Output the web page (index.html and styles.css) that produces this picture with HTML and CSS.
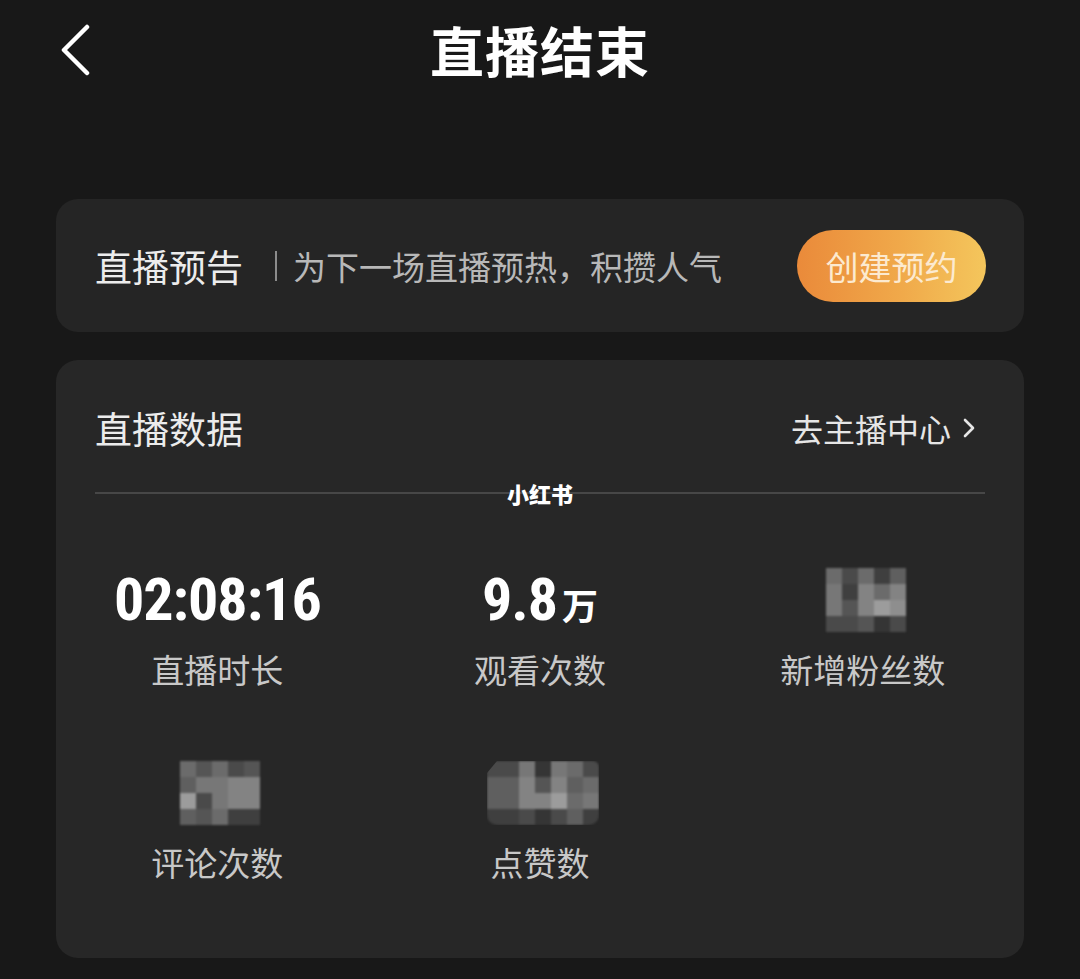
FILE: index.html
```html
<!DOCTYPE html>
<html lang="zh-CN">
<head>
<meta charset="utf-8">
<title>直播结束</title>
<link rel="stylesheet" href="styles.css">
</head>
<body>
<div class="page">
  <header class="topbar">
    <div class="topbar-left">
      <svg class="back" width="30" height="52" viewBox="0 0 30 52"><path d="M26 3 L3 26 L26 49"/></svg>
    </div>
    <h1 class="title">直播结束</h1>
    <div class="topbar-right"></div>
  </header>

  <section class="card notice">
    <span class="notice-title">直播预告</span>
    <span class="notice-sep"></span>
    <span class="notice-desc">为下一场直播预热，积攒人气</span>
    <button class="btn">创建预约</button>
  </section>

  <section class="card stats">
    <div class="stats-head">
      <span class="stats-title">直播数据</span>
      <span class="stats-link">去主播中心<svg class="chev" width="14" height="24" viewBox="0 0 14 24"><path d="M3 4 L11 12 L3 20"/></svg></span>
    </div>
    <div class="divider"><span class="watermark">小红书</span></div>
    <div class="grid">
      <div class="cell">
        <div class="value"><span class="num">02:08:16</span></div>
        <div class="label">直播时长</div>
      </div>
      <div class="cell">
        <div class="value"><span class="num">9.8</span><span class="unit">万</span></div>
        <div class="label">观看次数</div>
      </div>
      <div class="cell">
        <div class="value">
          <div class="mosaic m5 shift-r">
            <i class="g6"></i><i class="g3"></i><i class="g6"></i><i class="g2"></i><i class="g5"></i>
            <i class="g7"></i><i class="g2"></i><i class="g8"></i><i class="g6"></i><i class="g8"></i>
            <i class="g7"></i><i class="g4"></i><i class="g8"></i><i class="g10"></i><i class="g9"></i>
            <i class="g3"></i><i class="g3"></i><i class="g4"></i><i class="g1"></i><i class="g3"></i>
          </div>
        </div>
        <div class="label">新增粉丝数</div>
      </div>
      <div class="cell">
        <div class="value">
          <div class="mosaic m5 shift-r">
            <i class="g6"></i><i class="g4"></i><i class="g6"></i><i class="g3"></i><i class="g4"></i>
            <i class="g5"></i><i class="g7"></i><i class="g7"></i><i class="g8"></i><i class="g8"></i>
            <i class="g10"></i><i class="g3"></i><i class="g7"></i><i class="g8"></i><i class="g8"></i>
            <i class="g5"></i><i class="g4"></i><i class="g6"></i><i class="g2"></i><i class="g2"></i>
          </div>
        </div>
        <div class="label">评论次数</div>
      </div>
      <div class="cell">
        <div class="value">
          <div class="mosaic m7 shift-r rounded">
            <i class="g3"></i><i class="g3"></i><i class="g7"></i><i class="g1"></i><i class="g7"></i><i class="g6"></i><i class="g3"></i>
            <i class="g5"></i><i class="g5"></i><i class="g8"></i><i class="g4"></i><i class="g8"></i><i class="g5"></i><i class="g6"></i>
            <i class="g5"></i><i class="g5"></i><i class="g8"></i><i class="g8"></i><i class="g10"></i><i class="g6"></i><i class="g7"></i>
            <i class="g2"></i><i class="g2"></i><i class="g3"></i><i class="g1"></i><i class="g3"></i><i class="g5"></i><i class="g2"></i>
          </div>
        </div>
        <div class="label">点赞数</div>
      </div>
    </div>
  </section>
</div>
</body>
</html>
```

FILE: styles.css
```css
* { box-sizing: border-box; }

html, body {
  margin: 0;
  padding: 0;
  background: #181818;
}

body {
  width: 1080px;
  height: 979px;
  overflow: hidden;
  font-family: "Noto Sans CJK SC", "Noto Sans", sans-serif;
  color: #ececec;
}

.page {
  display: flex;
  flex-direction: column;
}

.topbar {
  height: 100px;
  display: grid;
  grid-template-columns: 1fr auto 1fr;
  align-items: center;
}

.topbar-left {
  padding-left: 61px;
  display: flex;
  align-items: center;
}

.back path {
  fill: none;
  stroke: #ffffff;
  stroke-width: 4.5;
  stroke-linecap: round;
  stroke-linejoin: round;
}

.title {
  margin: 0;
  font-size: 54px;
  line-height: 100px;
  font-weight: 700;
  color: #ffffff;
  letter-spacing: 1px;
}

.card {
  margin: 0 56px;
  background: #252525;
  border-radius: 22px;
}

.notice {
  margin-top: 99px;
  height: 133px;
  display: flex;
  align-items: center;
  padding: 0 38px 0 39px;
}

.notice-title {
  font-size: 37px;
  line-height: 40px;
  color: #ececec;
}

.notice-sep {
  width: 2px;
  height: 30px;
  background: #8c8c8c;
  margin: 0 16px 0 32px;
}

.notice-desc {
  font-size: 33px;
  line-height: 40px;
  color: #b8b8b8;
}

.btn {
  margin-left: auto;
  width: 189px;
  height: 72px;
  border: none;
  border-radius: 36px;
  background: linear-gradient(90deg, #ea8a3a 0%, #f0a94a 55%, #f4c65c 100%);
  font-family: "Noto Sans CJK SC", sans-serif;
  font-size: 33px;
  color: #fcead0;
  padding: 0;
}

.stats {
  margin-top: 28px;
  padding: 38px 0 76px;
  background: #272727;
}

.stats-head {
  margin: 0 39px;
  height: 60px;
  display: flex;
  align-items: center;
  justify-content: space-between;
  padding-right: 9px;
}

.stats-title {
  font-size: 37px;
  line-height: 40px;
  color: #ececec;
}

.stats-link {
  display: flex;
  align-items: center;
  gap: 11px;
  font-size: 32px;
  line-height: 40px;
  color: #e6e6e6;
}

.chev path {
  fill: none;
  stroke: #e6e6e6;
  stroke-width: 2.6;
  stroke-linecap: round;
  stroke-linejoin: round;
}

.divider {
  position: relative;
  margin: 34px 39px 0;
  height: 2px;
  background: #474747;
}

.watermark {
  position: absolute;
  left: 50%;
  top: 50%;
  transform: translate(-50%, -50%);
  font-size: 22px;
  line-height: 22px;
  font-weight: 900;
  color: #ffffff;
  white-space: nowrap;
}

.grid {
  margin-top: 74px;
  display: grid;
  grid-template-columns: repeat(3, 1fr);
  row-gap: 72px;
}

.cell {
  display: flex;
  flex-direction: column;
  align-items: center;
}

.value {
  height: 64px;
  display: flex;
  align-items: baseline;
  justify-content: center;
}

.num {
  font-family: "Liberation Sans Narrow", "Roboto Condensed", "Liberation Sans", sans-serif;
  font-weight: 700;
  font-size: 60px;
  line-height: 64px;
  letter-spacing: -1px;
  color: #ffffff;
}

.unit {
  font-size: 36px;
  font-weight: 700;
  color: #ffffff;
  margin-left: 5px;
}

.label {
  margin-top: 17px;
  font-size: 33px;
  line-height: 40px;
  color: #c8c8c8;
}

.mosaic {
  align-self: center;
  display: grid;
  grid-auto-rows: 16px;
  filter: blur(1.2px);
  overflow: hidden;
}

.m5 { grid-template-columns: repeat(5, 16px); }
.m7 { grid-template-columns: repeat(7, 16px); }

.shift-r { margin-left: 6px; }

.rounded {
  border-radius: 4px 6px 10px 10px;
  clip-path: polygon(10px 0, 100% 0, 100% 100%, 0 100%, 0 12px);
}

.mosaic i { display: block; }

.g1 { background: #353535; }
.g2 { background: #3f3f3f; }
.g3 { background: #4a4a4a; }
.g4 { background: #555555; }
.g5 { background: #5f5f5f; }
.g6 { background: #6b6b6b; }
.g7 { background: #777777; }
.g8 { background: #838383; }
.g9 { background: #8e8e8e; }
.g10 { background: #9c9c9c; }
```
